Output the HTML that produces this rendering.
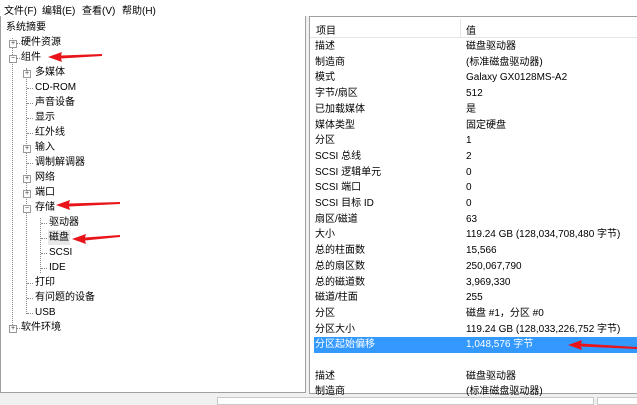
<!DOCTYPE html>
<html><head><meta charset="utf-8"><style>
body{margin:0;width:637px;height:401px;background:#f0f0f0;font-family:"Liberation Sans","Noto Sans CJK SC",sans-serif;font-size:10px;color:#000;position:relative;overflow:hidden}
.a{position:absolute;white-space:nowrap}
#menu{position:absolute;left:0;top:0;width:637px;height:16px;background:#fff}
#left{position:absolute;left:0;top:16px;width:304px;height:376px;background:#fff;border:1px solid #a0a0a0;border-top:none}
#right{position:absolute;left:309px;top:16px;width:330px;height:376px;background:#fff;border:1px solid #a0a0a0;border-right:none}
.t{position:absolute;line-height:15px;height:15px;white-space:nowrap}
.r{position:absolute;left:0;width:330px;height:15.7px;line-height:15.7px;white-space:nowrap}
.r span{position:absolute}
.box{position:absolute;width:6px;height:6px;border:1px solid #999;background:#fff;font-size:7px;line-height:6px;text-align:center;color:#333}
.vl{position:absolute;border-left:1px dotted #888}
.hl{position:absolute;border-top:1px dotted #888;width:6px}
#tree{position:absolute;left:0;top:2px;width:300px;height:370px}
</style></head><body>
<div id="menu">
<span class="a" style="left:4px;top:2px">文件(F)</span>
<span class="a" style="left:42px;top:2px">编辑(E)</span>
<span class="a" style="left:82px;top:2px">查看(V)</span>
<span class="a" style="left:122px;top:2px">帮助(H)</span>
</div>
<div id="left"><div id="tree">
<div class="vl" style="left:11px;top:20px;height:295px"></div>
<div class="vl" style="left:25px;top:50px;height:246px"></div>
<div class="vl" style="left:39px;top:200px;height:55px"></div>
<div class="t" style="left:5px;top:2px">系统摘要</div>
<div class="box" style="left:8px;top:22px">+</div><div class="hl" style="left:15px;top:25px"></div><div class="t" style="left:20px;top:17px">硬件资源</div>
<div class="box" style="left:8px;top:37px">−</div><div class="hl" style="left:15px;top:40px"></div><div class="t" style="left:20px;top:32px">组件</div>
<div class="box" style="left:22px;top:52px">+</div><div class="t" style="left:34px;top:47px">多媒体</div>
<div class="hl" style="left:26px;top:70px"></div><div class="t" style="left:34px;top:62px">CD-ROM</div>
<div class="hl" style="left:26px;top:85px"></div><div class="t" style="left:34px;top:77px">声音设备</div>
<div class="hl" style="left:26px;top:100px"></div><div class="t" style="left:34px;top:92px">显示</div>
<div class="hl" style="left:26px;top:115px"></div><div class="t" style="left:34px;top:107px">红外线</div>
<div class="box" style="left:22px;top:127px">+</div><div class="t" style="left:34px;top:122px">输入</div>
<div class="hl" style="left:26px;top:145px"></div><div class="t" style="left:34px;top:137px">调制解调器</div>
<div class="box" style="left:22px;top:157px">+</div><div class="t" style="left:34px;top:152px">网络</div>
<div class="box" style="left:22px;top:172px">+</div><div class="t" style="left:34px;top:167px">端口</div>
<div class="box" style="left:22px;top:187px">−</div><div class="t" style="left:34px;top:182px">存储</div>
<div class="hl" style="left:40px;top:205px"></div><div class="t" style="left:48px;top:197px">驱动器</div>
<div class="hl" style="left:40px;top:220px"></div><div class="t" style="left:47px;top:212px;background:#e8e8e8;padding:0 1px">磁盘</div>
<div class="hl" style="left:40px;top:235px"></div><div class="t" style="left:48px;top:227px">SCSI</div>
<div class="hl" style="left:40px;top:250px"></div><div class="t" style="left:48px;top:242px">IDE</div>
<div class="hl" style="left:26px;top:265px"></div><div class="t" style="left:34px;top:257px">打印</div>
<div class="hl" style="left:26px;top:280px"></div><div class="t" style="left:34px;top:272px">有问题的设备</div>
<div class="hl" style="left:26px;top:295px"></div><div class="t" style="left:34px;top:287px">USB</div>
<div class="box" style="left:8px;top:307px">+</div><div class="hl" style="left:15px;top:310px"></div><div class="t" style="left:20px;top:302px">软件环境</div>
</div></div>
<div id="right">
<div style="position:absolute;left:0;top:2px;width:330px;height:18px;border-bottom:1px solid #e5e5e5"></div>
<div style="position:absolute;left:150px;top:2px;height:18px;border-left:1px solid #e5e5e5"></div>
<span class="a" style="left:6px;top:5px">项目</span><span class="a" style="left:156px;top:5px">值</span>
<div style="position:absolute;top:22px;left:0;width:330px">
<div class="r" style="top:0"><span style="left:5px">描述</span><span style="left:156px">磁盘驱动器</span></div>
<div class="r" style="top:15.7px"><span style="left:5px">制造商</span><span style="left:156px">(标准磁盘驱动器)</span></div>
<div class="r" style="top:31.4px"><span style="left:5px">模式</span><span style="left:156px">Galaxy GX0128MS-A2</span></div>
<div class="r" style="top:47.1px"><span style="left:5px">字节/扇区</span><span style="left:156px">512</span></div>
<div class="r" style="top:62.8px"><span style="left:5px">已加载媒体</span><span style="left:156px">是</span></div>
<div class="r" style="top:78.5px"><span style="left:5px">媒体类型</span><span style="left:156px">固定硬盘</span></div>
<div class="r" style="top:94.2px"><span style="left:5px">分区</span><span style="left:156px">1</span></div>
<div class="r" style="top:109.9px"><span style="left:5px">SCSI 总线</span><span style="left:156px">2</span></div>
<div class="r" style="top:125.6px"><span style="left:5px">SCSI 逻辑单元</span><span style="left:156px">0</span></div>
<div class="r" style="top:141.3px"><span style="left:5px">SCSI 端口</span><span style="left:156px">0</span></div>
<div class="r" style="top:157px"><span style="left:5px">SCSI 目标 ID</span><span style="left:156px">0</span></div>
<div class="r" style="top:172.7px"><span style="left:5px">扇区/磁道</span><span style="left:156px">63</span></div>
<div class="r" style="top:188.4px"><span style="left:5px">大小</span><span style="left:156px">119.24 GB (128,034,708,480 字节)</span></div>
<div class="r" style="top:204.1px"><span style="left:5px">总的柱面数</span><span style="left:156px">15,566</span></div>
<div class="r" style="top:219.8px"><span style="left:5px">总的扇区数</span><span style="left:156px">250,067,790</span></div>
<div class="r" style="top:235.5px"><span style="left:5px">总的磁道数</span><span style="left:156px">3,969,330</span></div>
<div class="r" style="top:251.2px"><span style="left:5px">磁道/柱面</span><span style="left:156px">255</span></div>
<div class="r" style="top:266.9px"><span style="left:5px">分区</span><span style="left:156px">磁盘 #1，分区 #0</span></div>
<div class="r" style="top:282.6px"><span style="left:5px">分区大小</span><span style="left:156px">119.24 GB (128,033,226,752 字节)</span></div>
<div class="r" style="top:298.3px;left:4px;background:#3399ff;color:#fff"><span style="left:1px">分区起始偏移</span><span style="left:152px">1,048,576 字节</span></div>
<div class="r" style="top:329.7px"><span style="left:5px">描述</span><span style="left:156px">磁盘驱动器</span></div>
<div class="r" style="top:345.4px"><span style="left:5px">制造商</span><span style="left:156px">(标准磁盘驱动器)</span></div>
</div>
</div>
<div style="position:absolute;left:217px;top:397px;width:375px;height:6px;background:#fff;border:1px solid #c8c8c8"></div>
<div style="position:absolute;left:597px;top:397px;width:45px;height:6px;background:#fff;border:1px solid #c8c8c8"></div>
<svg width="637" height="401" style="position:absolute;left:0;top:0">
<g fill="#e8141a">
<polygon points="48,57 62,52 61,55.5 102,54 102,56 61,58.5 62,62"/>
<polygon points="56,205 70,200 69,203.5 120,202 120,204 69,206.5 70,210"/>
<polygon points="72,239 86,234 85,237.5 120,235 120,237 85,240.5 86,244"/>
<polygon points="568,345 582,340 581,343.5 637,347 637,349 581,346.5 582,350"/>
</g></svg>
</body></html>
